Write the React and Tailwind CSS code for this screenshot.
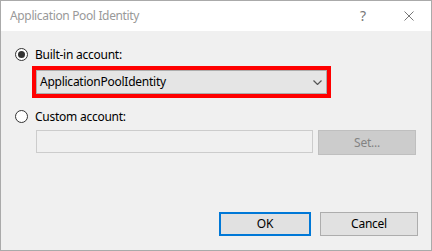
export default function App() {
  const font = { fontFamily: '"Noto Sans", "Open Sans", sans-serif' };
  return (
    <div className="w-[432px] h-[251px] bg-white" style={font}>
      <div className="w-[432px] h-[251px] border border-[#aaaaaa] flex flex-col">
        <div className="h-[30px] bg-white flex items-center shrink-0">
          <span className="ml-[9px] text-[12px] text-[#999999] leading-none tracking-[-0.35px]">Application Pool Identity</span>
          <span className="ml-auto mr-[38px] text-[14px] text-[#777777] leading-none">?</span>
          <svg width="10" height="10" viewBox="0 0 10 10" className="mr-[17px]">
            <path d="M0.5 0.5 L9.5 9.5 M9.5 0.5 L0.5 9.5" stroke="#777777" strokeWidth="1" fill="none" />
          </svg>
        </div>
        <div className="flex-1 bg-[#f0f0f0] flex flex-col text-[12px] text-black tracking-[-0.25px]">
          <div className="mt-[17px] ml-[14px] flex items-center h-[13px]">
            <div className="w-[13px] h-[13px] rounded-full border border-[#333333] flex items-center justify-center bg-white">
              <div className="w-[7px] h-[7px] rounded-full bg-[#333333]" />
            </div>
            <span className="ml-[7px] leading-none">Built-in account:</span>
          </div>
          <div className="mt-[5px] ml-[31px] w-[299px] h-[32px] border-4 border-[#ff0000]">
            <div className="w-full h-full border border-[#adadad] bg-[#e5e5e5] flex items-center pl-[3px] pr-[4px]">
              <span className="leading-none">ApplicationPoolIdentity</span>
              <svg width="9" height="5" viewBox="0 0 9 5" className="ml-auto">
                <path d="M0.5 0.5 L4.5 4.5 L8.5 0.5" stroke="#555555" strokeWidth="1.2" fill="none" />
              </svg>
            </div>
          </div>
          <div className="mt-[12px] ml-[14px] flex items-center h-[13px]">
            <div className="w-[13px] h-[13px] rounded-full border border-[#333333] bg-white" />
            <span className="ml-[7px] leading-none">Custom account:</span>
          </div>
          <div className="mt-[7px] ml-[35px] flex items-start">
            <div className="w-[277px] h-[23px] border border-[#cccccc] bg-[#f0f0f0]" />
            <div className="ml-[5px] w-[98px] h-[25px] border border-[#bfbfbf] bg-[#cccccc] flex items-center justify-center text-[#838383] leading-none">
              Set...
            </div>
          </div>
          <div className="mt-auto mb-[14px] mr-[13px] flex justify-end">
            <div className="w-[92px] h-[24px] border-2 border-[#0078d7] bg-[#e1e1e1] flex items-center justify-center leading-none">
              OK
            </div>
            <div className="ml-[9px] w-[98px] h-[24px] border border-[#adadad] bg-[#e1e1e1] flex items-center justify-center leading-none">
              Cancel
            </div>
          </div>
        </div>
      </div>
    </div>
  );
}
